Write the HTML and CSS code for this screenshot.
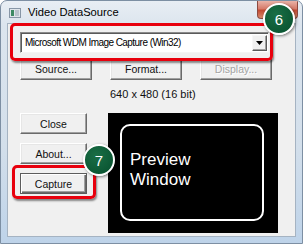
FILE: index.html
```html
<!DOCTYPE html>
<html lang="en">
<head>
    <meta charset="UTF-8">
    <meta name="viewport" content="width=device-width, initial-scale=1.0">
    <title>Video DataSource</title>
    <link rel="stylesheet" href="styles.css">
</head>
<body>
    <div class="window">
        <div class="titlebar">
            <svg class="app-icon" width="12" height="10" viewBox="0 0 12 10">
                <rect x="0.5" y="0.5" width="11" height="9" fill="#dfe5ea" stroke="#8796a6"/>
                <rect x="2" y="2" width="3" height="6" fill="#3d8a63"/>
                <rect x="6" y="2" width="4" height="6" fill="#b9c3cc"/>
            </svg>
            <span class="title">Video DataSource</span>
            <span class="close-btn"></span>
        </div>
        <div class="client">
            <div class="combo">
                <span class="combo-text">Microsoft WDM Image Capture (Win32)</span>
                <span class="combo-arrow">
                    <svg width="7" height="4" viewBox="0 0 7 4"><path d="M0 0H7L3.5 4Z" fill="#000"/></svg>
                </span>
            </div>
            <div class="btn-row">
                <button class="btn wide">Source...</button>
                <button class="btn wide">Format...</button>
                <button class="btn wide" disabled>Display...</button>
            </div>
            <div class="info">640 x 480 (16 bit)</div>
            <div class="main">
                <div class="side">
                    <button class="btn">Close</button>
                    <button class="btn">About...</button>
                    <button class="btn default">Capture</button>
                </div>
                <div class="preview">
                    <div class="preview-frame">Preview<br>Window</div>
                </div>
            </div>
        </div>

        <!-- tutorial callouts -->
        <div class="callout callout-combo"></div>
        <div class="callout callout-capture"></div>
        <div class="badge badge-6">6</div>
        <div class="badge badge-7">7</div>
    </div>
</body>
</html>
```

FILE: styles.css
```css
body {
    margin: 0;
    padding: 0;
    background-color: #fff;
    font-family: "Liberation Sans", Arial, sans-serif;
}

.window {
    position: relative;
    width: 303px;
    height: 244px;
    box-sizing: border-box;
    padding: 0 6px 6px 6px;
    border: 1px solid #7d8fa3;
    border-radius: 7px 7px 0 0;
    background: linear-gradient(to bottom, #e8eef4 0, #dce5ee 24px, #d3dfeb 60%, #bed3e9 100%);
    display: flex;
    flex-direction: column;
    overflow: hidden;
}

.titlebar {
    height: 22px;
    display: flex;
    align-items: center;
}

.app-icon {
    margin-left: 2px;
    margin-top: 1px;
}

.title {
    margin-left: 7px;
    font-size: 11.2px;
    color: #000;
}

.close-btn {
    margin-left: auto;
    margin-right: -2px;
    align-self: flex-start;
    width: 41px;
    height: 18px;
    box-sizing: border-box;
    border: 1px solid #8c4a40;
    border-top: none;
    border-radius: 0 0 4px 4px;
    background: linear-gradient(to bottom, #e9b3a8 0, #d77c6b 45%, #c24a33 55%, #d98a6a 100%);
}

.client {
    flex: 1;
    background-color: #f0f0f0;
    border: 1px solid #a5b3c2;
    padding: 8px 0 0 12px;
    font-size: 10.5px;
    color: #000;
}

.combo {
    width: 249px;
    height: 21px;
    box-sizing: border-box;
    border: 1px solid;
    border-color: #8a8a8a #f4f4f4 #f4f4f4 #8a8a8a;
    box-shadow: inset 1px 1px 0 #5a5a5a;
    background-color: #fff;
    display: flex;
    align-items: center;
    padding: 1px 1px 1px 4px;
}

.combo-text {
    flex: 1;
    font-size: 10px;
    letter-spacing: -0.55px;
}

.combo-arrow {
    width: 15px;
    height: 16px;
    box-sizing: border-box;
    background-color: #f0f0f0;
    border: 1px solid;
    border-color: #f7f7f7 #5a5a5a #5a5a5a #f7f7f7;
    box-shadow: inset -1px -1px 0 #a0a0a0;
    display: flex;
    align-items: center;
    justify-content: center;
}

.btn {
    height: 21px;
    padding: 0;
    box-sizing: border-box;
    font-family: "Liberation Sans", Arial, sans-serif;
    font-size: 10.5px;
    color: #111;
    background-color: #f0f0f0;
    border: 1px solid;
    border-color: #fff #6a6a6a #6a6a6a #fff;
    box-shadow: inset -1px -1px 0 #a0a0a0, inset 1px 1px 0 #e6e6e6;
}

.btn:disabled {
    color: #a3a3a3;
    text-shadow: 1px 1px 0 #fff;
}

.btn.default {
    border: 1px solid #5c5c5c;
    box-shadow: inset 1px 1px 0 #fff, inset -1px -1px 0 #6a6a6a, inset -2px -2px 0 #a0a0a0;
}

.btn-row {
    margin-top: 5px;
    display: flex;
    gap: 18px;
}

.btn.wide {
    width: 72px;
    height: 22px;
}

.info {
    height: 33px;
    box-sizing: border-box;
    padding: 8px 0 0 90px;
    font-size: 11px;
    line-height: 13px;
    color: #111;
}

.main {
    display: flex;
    gap: 21px;
}

.side {
    width: 67px;
    display: flex;
    flex-direction: column;
    gap: 9px;
}

.preview {
    width: 170px;
    height: 120px;
    box-sizing: border-box;
    padding: 11px 14px 12px 12px;
    background-color: #000;
}

.preview-frame {
    height: 100%;
    box-sizing: border-box;
    border: 2px solid #fff;
    border-radius: 10px;
    padding: 24px 0 0 8px;
    color: #fff;
    font-size: 17px;
    line-height: 20px;
}

/* callouts */
.callout {
    position: absolute;
    box-sizing: border-box;
    border: 3px solid #e8000d;
    border-radius: 5px;
    box-shadow: 1px 2px 2px rgba(0, 0, 0, 0.45);
}

.callout-combo {
    left: 9px;
    top: 22px;
    width: 263px;
    height: 38px;
}

.callout-capture {
    left: 11px;
    top: 164px;
    width: 84px;
    height: 34px;
}

.badge {
    position: absolute;
    width: 32px;
    height: 32px;
    box-sizing: border-box;
    border: 2px solid #fff;
    border-radius: 50%;
    background: radial-gradient(circle at 40% 35%, #1a6e46 0, #0c5834 70%);
    box-shadow: 1px 1px 3px rgba(0, 0, 0, 0.5);
    color: #fff;
    font-family: "Liberation Sans", Arial, sans-serif;
    font-size: 15px;
    display: flex;
    align-items: center;
    justify-content: center;
}

.badge-6 {
    left: 262px;
    top: 2px;
}

.badge-7 {
    left: 82px;
    top: 143px;
}
```
